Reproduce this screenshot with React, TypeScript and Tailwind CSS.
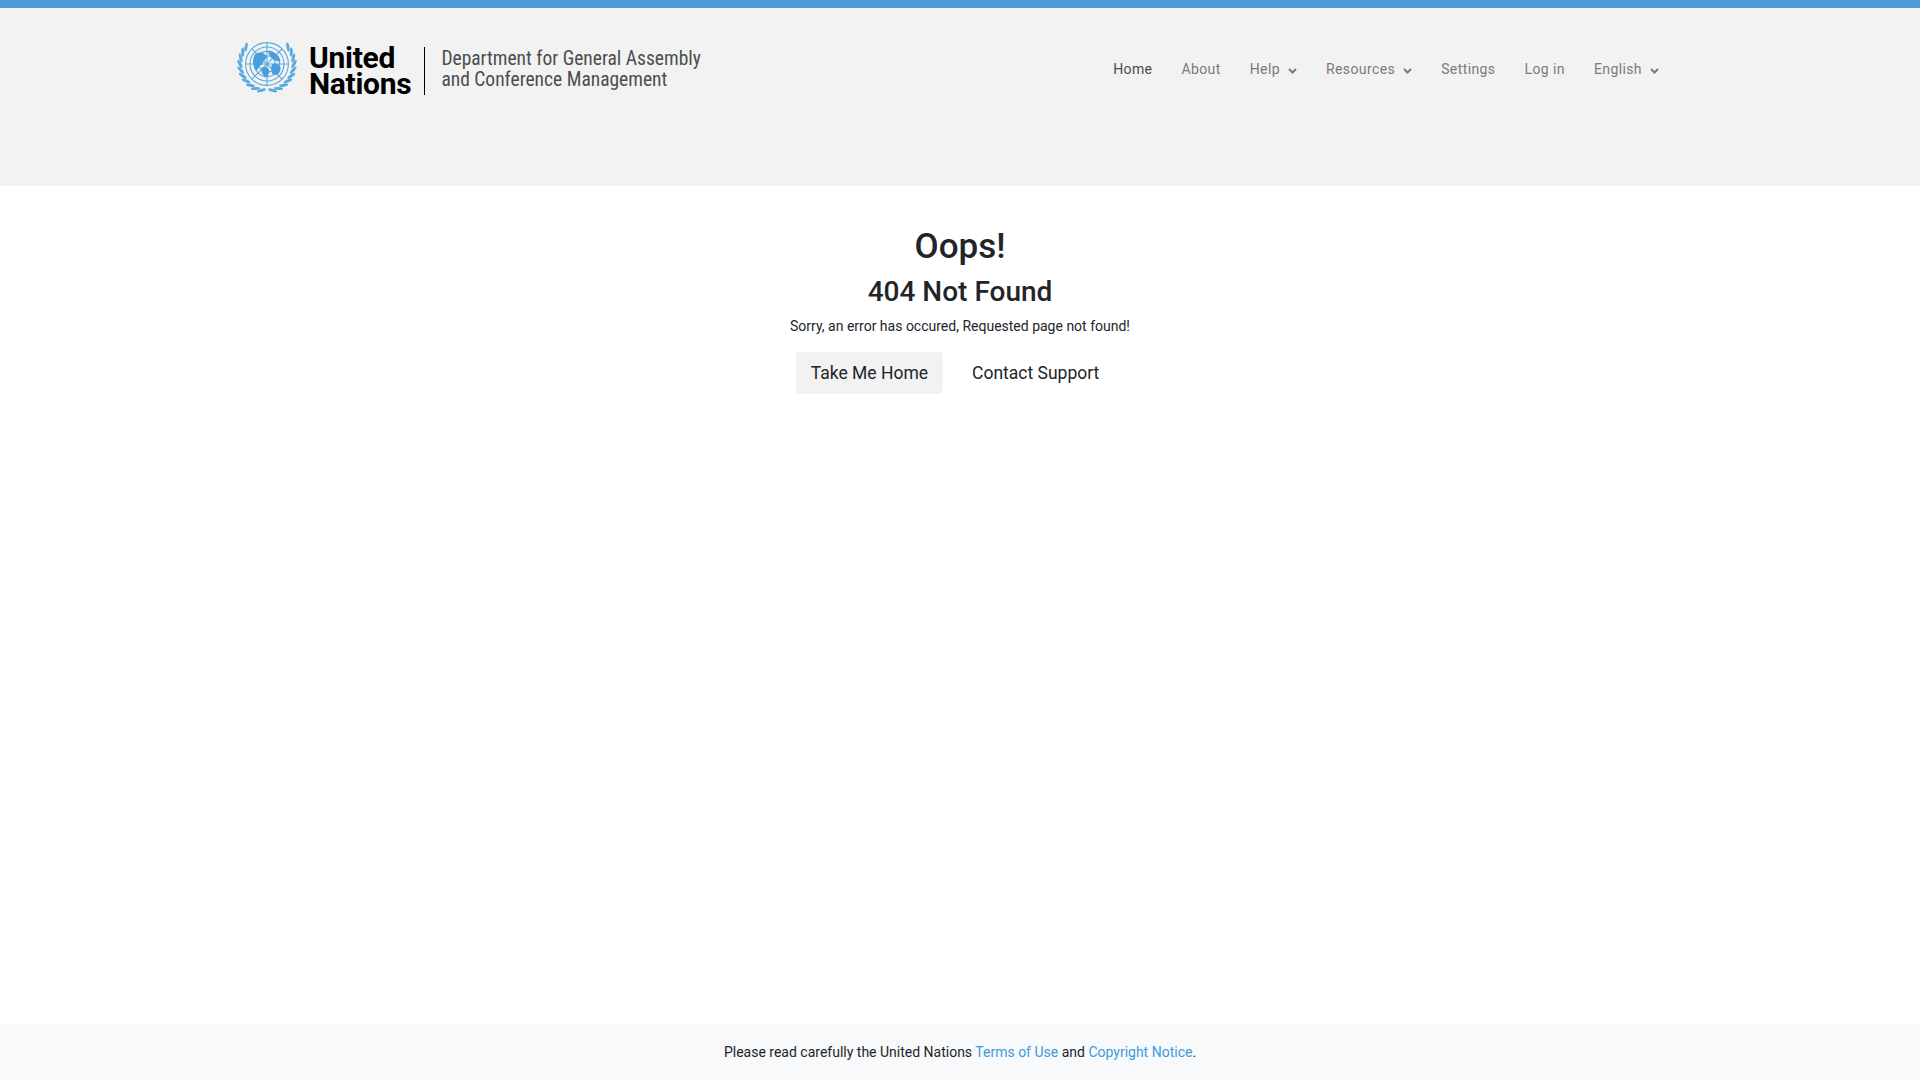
const navItems = [
  { label: "Home", active: true },
  { label: "About" },
  { label: "Help", caret: true },
  { label: "Resources", caret: true },
  { label: "Settings" },
  { label: "Log in" },
  { label: "English", caret: true },
]

const leafAngles = [12, 25, 38, 51, 64, 77, 90, 103, 116, 129]

function Emblem() {
  return (
    <svg width="64" height="54" viewBox="0 0 64 54" className="shrink-0">
      <g fill="#5aa9e0">
        {leafAngles.map((a) => (
          <g key={a}>
            <ellipse cx="32" cy="49" rx="4.6" ry="1.5" transform={`rotate(${a} 32 22) rotate(-28 32 49)`} />
            <ellipse cx="32" cy="49" rx="4.6" ry="1.5" transform={`rotate(${-a} 32 22) rotate(28 32 49)`} />
          </g>
        ))}
      </g>
      <g fill="none" stroke="#5aa9e0" strokeWidth="1.1">
        <circle cx="32" cy="22" r="21.4" />
        <circle cx="32" cy="22" r="17" />
        <circle cx="32" cy="22" r="12.6" />
        <circle cx="32" cy="22" r="8.2" />
        <path d="M32 0.6V43.4M10.6 22H53.4M16.9 6.9L47.1 37.1M47.1 6.9L16.9 37.1" />
      </g>
      <g fill="#4a9edb" transform="translate(32 22) scale(0.9) translate(-33 -27)">
        <path d="M20 16 C25 12 31 15 33 19 C31 23 29 24 27 28 C24 29 23 33 21 35 C17 30 16 22 20 16Z" />
        <path d="M35 12 C41 13 47 17 48 24 C44 25 40 22 37 19 C35 17 34 14 35 12Z" />
        <path d="M27 31 C31 29 35 31 36 35 C35 39 33 41 31 42 C28 39 26 35 27 31Z" />
        <path d="M39 27 C44 26 49 28 48 33 C47 38 43 41 39 38 C37 34 37 30 39 27Z" />
      </g>
    </svg>
  )
}

function Caret() {
  return (
    <svg width="9" height="6" viewBox="0 0 9 6" className="mt-[3px] shrink-0" fill="none" stroke="#7a7a7a" strokeWidth="2">
      <path d="M1 1L4.5 4.5L8 1" />
    </svg>
  )
}

export default function App() {
  return (
    <div className="min-h-screen flex flex-col bg-white font-['Roboto',sans-serif]">
      <header className="h-[186px] bg-[#f2f2f2] border-t-8 border-[#4d9dd8] flex items-start justify-between pl-[235px] pr-[261px] pt-[34px]">
        <div className="flex items-center h-[54px]">
          <Emblem />
          <div className="ml-[10px] mt-[3px] text-[30px] leading-[26px] font-bold text-black tracking-[-0.3px]">
            <div>United</div>
            <div>Nations</div>
          </div>
          <div className="ml-[13px] mt-[3px] h-[48px] w-px bg-black" />
          <div className="ml-[16px] text-[19.5px] leading-[21px] text-[#4d4d4d] [font-stretch:75%] whitespace-nowrap">
            <div>Department for General Assembly</div>
            <div>and Conference Management</div>
          </div>
        </div>
        <nav className="flex items-center gap-[29px] h-[55px] text-[14px] tracking-[0.4px]">
          {navItems.map((item) => (
            <a key={item.label} className={`flex items-center gap-[8px] ${item.active ? "text-[#4a4a4a]" : "text-[#7a7a7a]"}`}>
              {item.label}
              {item.caret && <Caret />}
            </a>
          ))}
        </nav>
      </header>

      <main className="flex-1 flex flex-col items-center pt-[37px] text-[#212529]">
        <h1 className="text-[35px] leading-[48px] font-medium">Oops!</h1>
        <h2 className="text-[28px] leading-[40px] font-medium mt-[1px]">404 Not Found</h2>
        <p className="text-[14px] leading-[21px] mt-[4px]">Sorry, an error has occured, Requested page not found!</p>
        <div className="flex gap-[14px] mt-[15px] mr-[10px]">
          <a className="h-[42px] px-[15px] flex items-center text-[17.5px] rounded bg-[#f2f2f2]">Take Me Home</a>
          <a className="h-[42px] px-[15px] flex items-center text-[17.5px] rounded">Contact Support</a>
        </div>
      </main>

      <footer className="h-[56px] bg-[#f8f9fa] flex items-center justify-center text-[14px] text-[#212529]">
        <p>
          Please read carefully the United Nations <a className="text-[#3d9bdc]">Terms of Use</a> and{" "}
          <a className="text-[#3d9bdc]">Copyright Notice</a>.
        </p>
      </footer>
    </div>
  )
}
